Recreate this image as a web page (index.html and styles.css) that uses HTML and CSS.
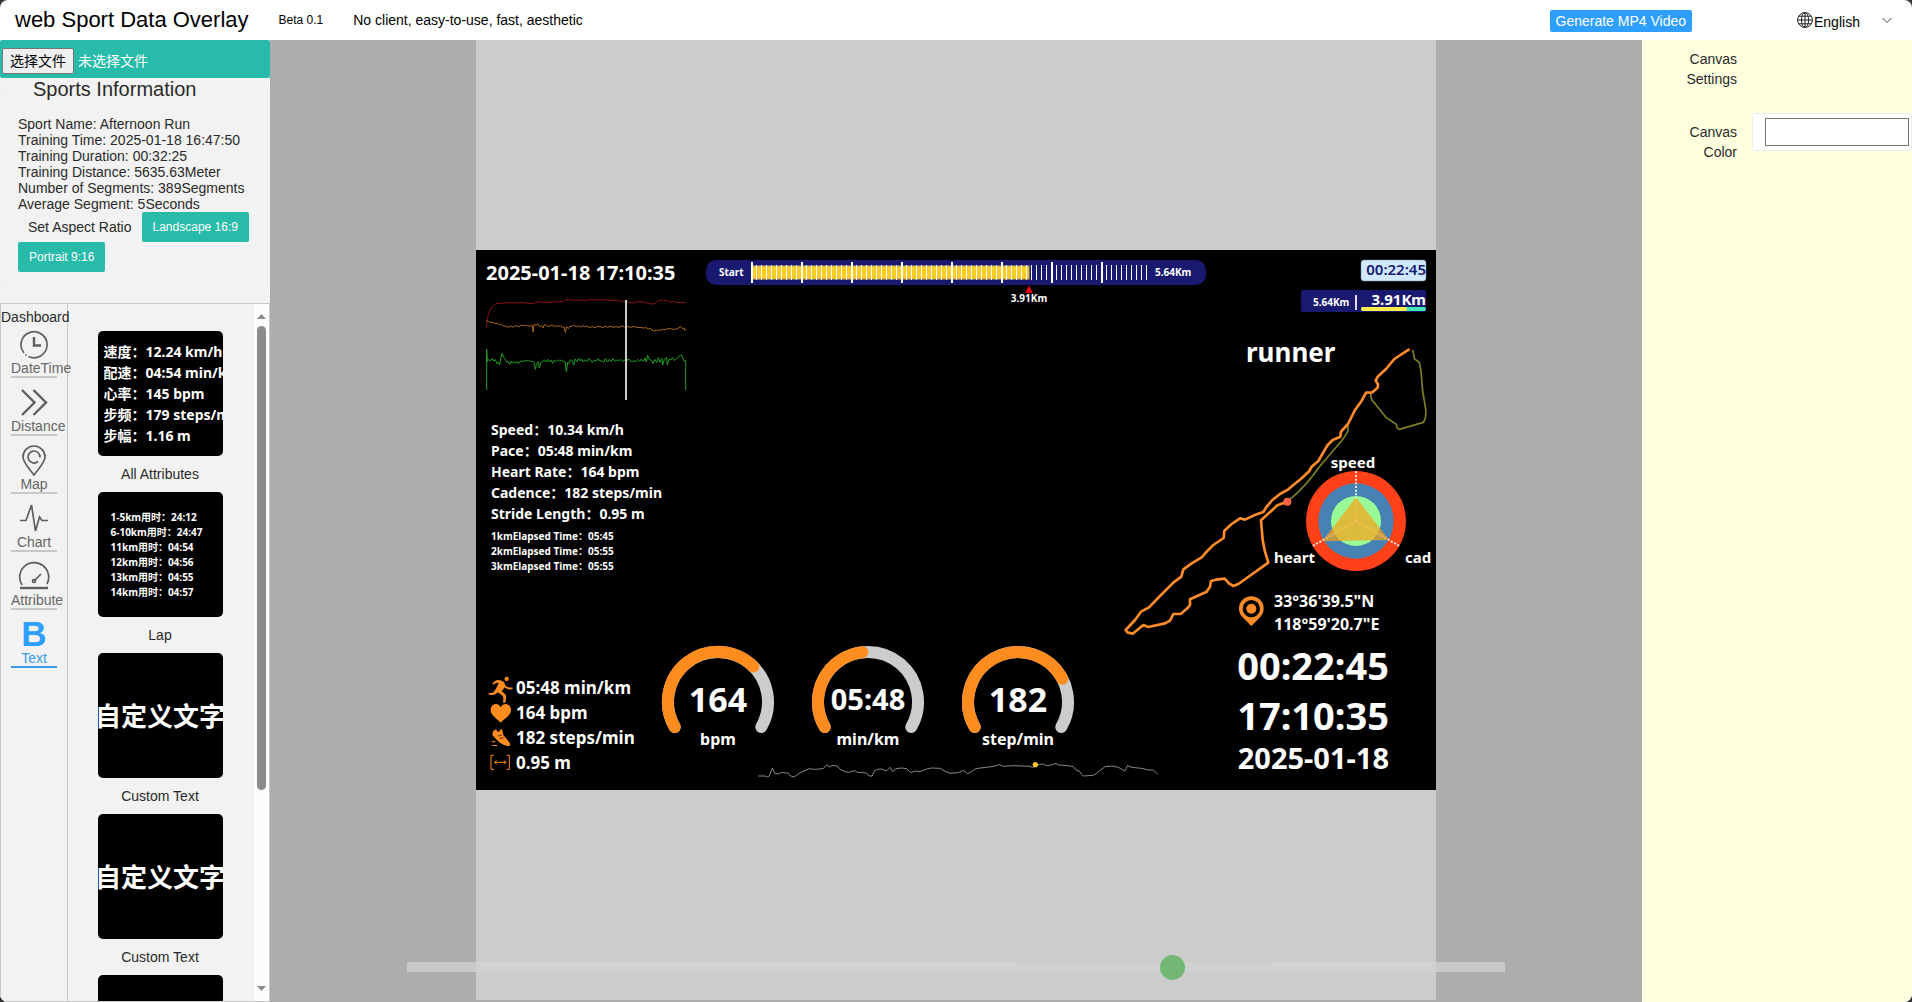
FILE: index.html
```html
<!DOCTYPE html>
<html lang="en">
<head>
<meta charset="utf-8">
<title>web Sport Data Overlay</title>
<link rel="stylesheet" href="styles.css">
</head>
<body>
<div class="app">
  <header class="topbar">
    <h1 class="brand">web Sport Data Overlay</h1>
    <span class="beta">Beta 0.1</span>
    <p class="slogan">No client, easy-to-use, fast, aesthetic</p>
    <button class="generate" type="button">Generate MP4 Video</button>
    <label class="language">
      <svg class="globe" viewBox="0 0 16 16" aria-hidden="true"><circle cx="8" cy="8" r="7.4"/><ellipse cx="8" cy="8" rx="3.6" ry="7.4"/><path d="M8 .6v14.8M.6 8h14.8M1.8 4.2h12.4M1.8 11.8h12.4"/></svg>
      <select aria-label="Language"><option>English</option></select>
      <svg class="chevron" viewBox="0 0 10 7" aria-hidden="true"><path d="M.5 1 5 5.500 9.500 1"/></svg>
    </label>
  </header>

  <div class="workspace">
    <aside class="side">
      <div class="file-bar">
        <input class="file-input" type="file" id="track-file">
        <label class="file-button" for="track-file">选择文件</label>
        <span class="file-name">未选择文件</span>
      </div>
      <fieldset class="info">
        <legend>Sports Information</legend>
        <div>Sport Name: Afternoon Run</div>
        <div>Training Time: 2025-01-18 16:47:50</div>
        <div>Training Duration: 00:32:25</div>
        <div>Training Distance: 5635.63Meter</div>
        <div>Number of Segments: 389Segments</div>
        <div>Average Segment: 5Seconds</div>
        <div class="ratio">
          <span class="ratio-label">Set Aspect Ratio</span>
          <button type="button">Landscape 16:9</button>
          <button type="button">Portrait 9:16</button>
        </div>
      </fieldset>

      <div class="library">
        <nav class="tabs">
          <div class="tabs-title">Dashboard</div>
          <a class="tab" href="#datetime"><svg viewBox="0 0 32 32"><path d="M6 25A13 13 0 1 1 10.500 28.500M7.500 26.500l1 .800"/><path class="bold" d="M16 9v8.500h7"/></svg><span>DateTime</span></a>
          <a class="tab" href="#distance"><svg viewBox="0 0 32 32"><path class="bold" d="M4 4l12.500 12.500L4 29M15.500 4L28 16.500 15.500 29"/></svg><span>Distance</span></a>
          <a class="tab" href="#map"><svg viewBox="0 0 32 32"><path d="M16 31C11 24 5 18.500 5 13a11 11 0 0 1 22 0c0 5.500-6 11-11 18z"/><path d="M20 17.500A6 6 0 1 1 22 13.500"/></svg><span>Map</span></a>
          <a class="tab" href="#chart"><svg viewBox="0 0 32 32"><path d="M2 18.500h6L13.500 3l4 26 4-14 2.500 3.500h6"/></svg><span>Chart</span></a>
          <a class="tab" href="#attribute"><svg viewBox="0 0 32 32"><path d="M4 25A14.500 14.500 0 1 1 29 24"/><path class="bold" d="M2 28h28"/><path d="M16 21l7-7"/><circle cx="16" cy="21" r="1.500"/></svg><span>Attribute</span></a>
          <a class="tab active" href="#text"><b class="glyph">B</b><span>Text</span></a>
        </nav>
        <div class="gallery">
          <figure><div class="thumb attrs"><p>速度：12.24 km/h</p><p>配速：04:54 min/km</p><p>心率：145 bpm</p><p>步频：179 steps/min</p><p>步幅：1.16 m</p></div><figcaption>All Attributes</figcaption></figure>
          <figure><div class="thumb laps"><p>1-5km用时：24:12</p><p>6-10km用时：24:47</p><p>11km用时：04:54</p><p>12km用时：04:56</p><p>13km用时：04:55</p><p>14km用时：04:57</p></div><figcaption>Lap</figcaption></figure>
          <figure><div class="thumb custom"><p>自定义文字</p></div><figcaption>Custom Text</figcaption></figure>
          <figure><div class="thumb custom"><p>自定义文字</p></div><figcaption>Custom Text</figcaption></figure>
          <figure><div class="thumb custom"></div></figure>
        </div>
        <div class="scroll" aria-hidden="true">
          <svg viewBox="0 0 9 5"><path d="M0 5 4.500 0 9 5z"/></svg>
          <div class="scroll-track"><div class="scroll-thumb"></div></div>
          <svg viewBox="0 0 9 5"><path d="M0 0h9L4.500 5z"/></svg>
        </div>
      </div>
    </aside>

    <main class="viewer">
      <div class="stage">
        <svg class="canvas" viewBox="0 0 960 540" role="img" aria-label="Overlay preview">
          <rect width="960" height="540"/>
          <text class="t" x="10" y="30" font-size="20">2025-01-18 17:10:35</text>

          <!-- heart rate, cadence and speed history -->
          <svg x="-6" y="-10" width="380" height="180" viewBox="0 0 1140 540">
            <g class="trace">
              <path stroke="#8b1111" d="M49 263l3-25 4-18 6-14 8-10 8-5 14-1 20-2 25 1 20-1 20 2 14 1 6-4 10-2 12 3 14-1 16-2 16 1 14-2 5-4 10-1 14 2 16-1 20 1 20-2 20 1 16-1 18 2 20 0 14 2 L490 189 508 184 528 188 545 192 555 191 562 183 570 181 592 181 598 186 610 185 620 188 635 187 648 188"/>
              <path stroke="#a8691a" d="M49 243h6l4 4 10 0 5 3 10 0 4 5 6-3 5 5 10 2 8 3 6-4 6 4 6-5 6 1 6 2 6-4 8 1 6-1 6 2h8l6-2 2 20 3-22 6 1 6-3 5 8 5-4 5 8 4-10 6 1 5 5 6-2 6-4 6 5 8-1 6 1 6-2 6 5 4-1 4 16 4-17 5 6 5-8 6 2 5-5 8 5 6-2 7 3 6-4 6 3 7-2 8 5 8-3 8 3 8-4 8 1 8 3 6-5 8 4 7-3 10 3 8-2 10 2 8-4 8 3 10-1 10 2 8-3 10 4 10-1 8 2 8-1 8 4 4-3 6 6 8 2 8-2 8 1 8-3 8 1 8-3h8l6 2 L620 267 632 260 638 266 643 264 645 272 648 268"/>
              <path stroke="#20a020" d="M50 450V327l2 37 4-6 5 5 6-8 4 8 5-4 5 12 4-5 4 9 4-24 4-12 3 12 5 5 5 10 4-1 5 8 4-10 4 6 5-4 5 5 4-6 5 7 5-7 5-1 5 2 4-5 6 3 5-2 6 4 5-1 5 3 4 21 4-15 4-8 4 19 4-16 5-3 5-6 6 7 5-8 5 8 5-6 5 10 5-9 5 4 6-6 5 5 5-4 6 4 5 1 4 30 4-28 4 3 5-11 5 4 4 13 4-19 6 8 5-10 5 8 4-6 5 9 5-7 6 6 5-9 5 3 6 8 6-7 6 3 5-7 6 8 5-3 6 6 5-11 6 10 6-8 5 7 6-9 7 8 5-5 5 4 6-5 6 7 5-5 6 6 5-9 6 3 6 6 6-4 6 3 5-7 6 6 5-7 6 7 5-10 4 12 4-20 5 12 6 3 5 10 6-13 5 10 5-15 5 14 5-12 3 20 5-17 6-6 3 22 5-16 6 2 5-7 5 9 6-6 6-4 6-7 5 2 L642 364 647 362V450"/>
            </g>
            <path stroke="#ccc" stroke-width="6" d="M468 180v300"/>
          </svg>

          <!-- distance ruler -->
          <rect x="230" y="10" width="500" height="25" rx="10" fill="#191970"/>
          <rect x="276" y="16" width="277" height="13" fill="#ffcc2a" stroke="#c9b06a"/>
          <path class="minor" d="M275 22.500h396"/>
          <path class="major" d="M275 22.500h352"/>
          <text class="t" x="243" y="26" font-size="10">Start</text>
          <text class="t" x="679" y="26" font-size="10">5.64Km</text>
          <path fill="#e8000d" d="M553 35.500l4 7.500h-8z"/>
          <text class="t mid" x="553" y="52" font-size="10">3.91Km</text>

          <rect x="885" y="10" width="65" height="21" rx="3" fill="#cfeaff" stroke="#7f93a8" stroke-width=".5"/>
          <text class="t navy end" x="950" y="25" font-size="15">00:22:45</text>

          <rect x="825" y="40" width="125" height="22" rx="2" fill="#191970"/>
          <text class="t" x="837" y="56" font-size="10">5.64Km</text>
          <path stroke="#dde" stroke-width="2" d="M880 45v15"/>
          <text class="t end" x="950" y="55" font-size="15">3.91Km</text>
          <path stroke="#40e5b5" stroke-width="4" stroke-linecap="round" d="M887 59h61"/>
          <path stroke="#ffee4a" stroke-width="4" stroke-linecap="round" d="M887 59h42"/>

          <text class="t" x="770" y="112" font-size="26">runner</text>

          <!-- route, radar and position pin -->
          <svg x="634" y="90" width="330" height="310" viewBox="0 0 990 930">
            <g class="route">
              <path stroke="#808026" stroke-width="5" d="M909 32L913 56 928 68 933 93 938 153 948 213 946 235 940 247 868 268 862 265 859 253 829 233 786 180 782 168 783 160M714 258V274L700 296 625 384C595 429 570 454 532 485"/>
              <path stroke="#ff8c28" stroke-width="8" d="M896 29L853 57 828 87 803 110 797 122 804 133 803 143 787 157 768 158 755 182 735 210 714 252 693 275 691 290 668 300 653 315 640 337 625 363 605 380 598 393 575 415 550 435 535 448 510 462 487 480 470 500 460 516 432 526 405 539 390 535 365 552 343 572 341 594 310 615 290 635 275 652 245 670 220 688 214 710 190 728 150 768 117 802 93 815 75 840 47 870 52 877 68 881 100 855 115 861 165 850 180 842 190 822 212 822 232 805 240 795 240 778 290 755 300 740 303 723 318 719 344 716 357 730 370 738 385 732 475 668 465 635 458 600 453 541 502 496 532 485"/>
            </g>
            <circle cx="532" cy="485" r="12" fill="#ff6347"/>
            <circle cx="738" cy="543" r="150" fill="#ff4019"/>
            <circle cx="738" cy="543" r="113" fill="#4682b4"/>
            <circle cx="738" cy="543" r="75" fill="#98fb98"/>
            <path stroke="#fff" stroke-width="5" stroke-dasharray="6 5" d="M738 543V393M738 543l-130 75M738 543l130 75"/>
            <path fill="#f5a31a" fill-opacity=".72" d="M738 472l99 128-200 4z"/>
            <path fill="#ff8c28" fill-rule="evenodd" d="M424 858l-26-26a37 37 0 1 1 52 0zM424 780a26 26 0 1 0 0 52 26 26 0 1 0 0-52zM424 791a15 15 0 1 1 0 30 15 15 0 1 1 0-30z"/>
          </svg>
          <text class="t mid" x="877" y="218" font-size="15">speed</text>
          <text class="t" x="798" y="313" font-size="15">heart</text>
          <text class="t" x="929" y="313" font-size="15">cad</text>
          <text class="t" x="798" y="357" font-size="16">33°36'39.5"N</text>
          <text class="t" x="798" y="380" font-size="16">118°59'20.7"E</text>
          <text class="t end" x="913" y="430" font-size="38">00:22:45</text>
          <text class="t end" x="913" y="480" font-size="38">17:10:35</text>
          <text class="t end" x="913" y="519" font-size="29">2025-01-18</text>

          <g class="t" font-size="14">
            <text x="15" y="185">Speed：10.34 km/h</text>
            <text x="15" y="206">Pace：05:48 min/km</text>
            <text x="15" y="227">Heart Rate：164 bpm</text>
            <text x="15" y="248">Cadence：182 steps/min</text>
            <text x="15" y="269">Stride Length：0.95 m</text>
          </g>
          <g class="t" font-size="10">
            <text x="15" y="290">1kmElapsed Time：05:45</text>
            <text x="15" y="305">2kmElapsed Time：05:55</text>
            <text x="15" y="320">3kmElapsed Time：05:55</text>
          </g>

          <!-- live values with icons -->
          <svg x="-6" y="380" width="360" height="160" viewBox="0 0 1080 480">
            <g fill="#ff8c1e">
              <circle cx="110" cy="147" r="6.500"/>
              <path d="M75 153c8-5 17-3 27 3l4 10c5 6 12 8 21 6l1 5c-9 3-18 1-24-5l-9 12 10 8c4 4 4 12 1 26h-7c2-12 1-19-3-22l-13-9c-7 10-17 9-29 6l3-4c10 1 15-2 21-13l8-17c-6-2-10 0-14 5l-5-3z"/>
              <path d="M92 278C80 266 62 256 62 240c0-19 22-25 30-8 8-17 31-11 31 8 0 16-19 26-31 38z"/>
              <path d="M70 302l8-4 5 7c5 1 8-3 8-8l6 3 3 15 18 22c5 7 2 12-5 11-12-1-20-7-28-14l-15-15c-4-5-3-9 0-17z"/>
              <path d="M65 334h11v3H65zM67 345h15v3H67z"/>
            </g>
            <path fill="none" stroke="#000" stroke-width="2" d="M84 318l13-3M88 326l13-3"/>
            <path fill="none" stroke="#ff8c1e" stroke-width="3" d="M72 376h-9v42h9M110 376h8v42h-8M74 397h34M80 391l-6 6 6 6M102 391l6 6-6 6"/>
          </svg>
          <g class="t" font-size="17">
            <text x="40" y="444">05:48 min/km</text>
            <text x="40" y="469">164 bpm</text>
            <text x="40" y="494">182 steps/min</text>
            <text x="40" y="519">0.95 m</text>
          </g>

          <!-- gauges -->
          <g class="gauge">
            <path d="M198.700 477A50 50 0 1 1 285.300 477M348.700 477A50 50 0 1 1 435.300 477M498.700 477A50 50 0 1 1 585.300 477"/>
            <path class="value" d="M198.700 477A50 50 0 0 1 277.400 416.600M348.700 477A50 50 0 0 1 386.300 402.300M498.700 477A50 50 0 1 1 586.300 428.800"/>
          </g>
          <g class="t mid">
            <text x="242" y="462" font-size="34">164</text>
            <text x="392" y="460" font-size="29">05:48</text>
            <text x="542" y="462" font-size="34">182</text>
            <text x="242" y="495" font-size="16">bpm</text>
            <text x="392" y="495" font-size="16">min/km</text>
            <text x="542" y="495" font-size="16">step/min</text>
          </g>

          <!-- elevation profile -->
          <svg x="264" y="380" width="440" height="160" viewBox="0 0 1320 480">
            <path fill="none" stroke="#888" stroke-width="3" d="M54 438L75 438 82 441 88 438 97 414 104 430 115 432 125 427 145 430 152 438 163 441 172 434 180 428 195 422 207 416 220 418 240 417 250 415 262 404 268 411 278 406 292 408 300 418 315 425 325 427 345 422 352 427 380 429 387 438 397 438 402 424 412 418 425 417 432 420 440 422 450 412 458 425 468 416 485 414 500 416 512 428 525 423 540 425 560 417 575 414 600 415 612 422 630 430 655 428 670 421 683 431 695 425 705 417 720 414 740 412 765 408 778 404 790 409 820 407 870 409 878 413 890 404 910 402 920 407 935 405 948 400 955 405 985 407 1000 410 1008 420 1018 424 1030 438 1060 436 1072 428 1095 410 1115 408 1135 412 1155 423 1162 407 1175 412 1205 415 1225 420 1240 420 1253 432"/>
            <circle cx="886" cy="404" r="8" fill="#ffc832"/>
          </svg>
        </svg>
      </div>
      <input class="timeline" type="range" min="0" max="389" value="273" aria-label="Timeline">
    </main>

    <aside class="settings">
      <div class="field"><span class="field-label">Canvas Settings</span></div>
      <div class="field">
        <label class="field-label" for="canvas-color">Canvas Color</label>
        <input class="color" type="color" id="canvas-color" value="#ffffff">
      </div>
    </aside>
  </div>
</div>
</body>
</html>
```
FILE: styles.css
```css
* { box-sizing: border-box; }

body {
  margin: 0;
  background: #333;
  color: #2a2a2a;
  font: 14px/16px "Liberation Sans", Arial, "Noto Sans CJK SC", sans-serif;
}

p, figure, h1 { margin: 0; }
button, select, input { font-family: inherit; }

.app {
  display: flex;
  flex-direction: column;
  height: 100vh;
  border-radius: 8px;
  overflow: hidden;
  background: #fff;
}

/* top bar */
.topbar {
  display: flex;
  align-items: center;
  flex: 0 0 40px;
  padding: 0 20px 0 15px;
  color: #000;
}
.brand { font-size: 22px; line-height: 40px; font-weight: 400; }
.beta { margin-left: 30px; font-size: 12px; }
.slogan { margin-left: 30px; }
.generate {
  height: 22px;
  margin: 2px 105px 0 auto;
  padding: 0 6px;
  border: 0;
  border-radius: 2px;
  background: #2f9fff;
  color: #fff;
  font-size: 14px;
}
.language { display: flex; align-items: center; }
.globe { width: 16px; height: 16px; fill: none; stroke: #222; stroke-width: 1; }
.language select {
  width: 69px;
  margin-top: 4px;
  padding: 0 1px;
  border: 0;
  background: none;
  appearance: none;
  color: #000;
  font-size: 14px;
}
.chevron { width: 10px; height: 7px; fill: none; stroke: #444; }

.workspace { display: flex; flex: 1; min-height: 0; }

/* left side */
.side { display: flex; flex-direction: column; flex: 0 0 270px; background: #f2f2f2; }
.file-bar {
  display: flex;
  align-items: center;
  gap: 4px;
  height: 38px;
  padding: 4px 2px 0;
  border-radius: 2px;
  background: #28bbaa;
  color: #fff;
}
.file-input { position: absolute; width: 1px; height: 1px; opacity: 0; }
.file-button {
  padding: 3px 7px;
  border: 1px solid #767676;
  border-radius: 2px;
  background: #efefef;
  color: #000;
  line-height: 18px;
}
.info {
  min-width: 0;
  height: 210px;
  margin: 0 2px 15px;
  padding: 16px 15px 14px;
  border: 1px solid #eee;
}
.info legend { margin-left: 5px; padding: 0 10px; font-size: 20px; line-height: 22px; }
.ratio { display: flex; flex-wrap: wrap; align-items: center; }
.ratio-label { padding: 0 10px; }
.ratio button {
  height: 30px;
  padding: 0 11px;
  border: 0;
  border-radius: 2px;
  background: #28bbaa;
  color: #fff;
  font-size: 12px;
}

.library {
  display: flex;
  flex: 1;
  min-height: 0;
  border: 1px solid #c8c8c8;
}
.tabs {
  display: flex;
  flex-direction: column;
  align-items: flex-start;
  gap: 8px;
  flex: 0 0 67px;
  min-width: 0;
  border-right: 1px solid #c8c8c8;
}
.tabs-title { margin-bottom: -8px; padding-top: 2px; line-height: 22px; }
.tab {
  display: flex;
  flex-direction: column;
  width: 46px;
  margin-left: 10px;
  border-bottom: 2px solid #c8c8c8;
  color: #666;
  text-align: center;
  text-decoration: none;
}
.tab svg { width: 32px; height: 32px; margin-left: 7px; fill: none; stroke: #5f5f5f; stroke-width: 1.700; }
.tab .bold { stroke-width: 2.400; }
.glyph { height: 32px; font-size: 35px; line-height: 32px; }
.tab.active { border-color: #3a9be8; color: #3a9bee; }
.tab.active .glyph { color: #2f9fff; }

.gallery {
  display: flex;
  flex-direction: column;
  align-items: center;
  flex: 1;
  min-width: 0;
  padding: 27px 2px 0 0;
  overflow: hidden;
}
.thumb {
  display: flex;
  flex-direction: column;
  justify-content: center;
  width: 125px;
  height: 125px;
  border-radius: 5px;
  overflow: hidden;
  background: #000;
  color: #fff;
  font-family: "Noto Sans", "Noto Sans CJK SC", sans-serif;
  font-weight: 700;
  white-space: nowrap;
}
.attrs { padding-left: 6px; font-size: 14px; line-height: 21px; }
.laps { padding-left: 13px; font-size: 10px; line-height: 15px; }
.custom { align-items: center; font-size: 26px; line-height: 36px; }
figcaption { line-height: 36px; text-align: center; }

.scroll {
  display: flex;
  flex-direction: column;
  align-items: center;
  gap: 7px;
  flex: 0 0 15px;
  padding: 10px 0;
  background: #fcfcfc;
}
.scroll svg { width: 9px; height: 5px; fill: #8b8b8b; }
.scroll-track { flex: 1; }
.scroll-thumb { width: 9px; height: 71%; border-radius: 5px; background: #8b8b8b; }

/* preview */
.viewer {
  position: relative;
  display: flex;
  justify-content: center;
  flex: 1;
  min-width: 0;
  background: #aeadab;
}
.stage {
  display: flex;
  align-items: center;
  height: calc(100% - 2px);
  aspect-ratio: 1;
  background: #ccc;
}
.canvas { display: block; width: 100%; }
.t {
  fill: #fff;
  font-family: "Noto Sans", "Noto Sans CJK SC", sans-serif;
  font-weight: 700;
}
.mid { text-anchor: middle; }
.end { text-anchor: end; }
.navy { fill: #191970; font-weight: 600; }
.trace { fill: none; stroke-width: 3; stroke-linejoin: round; }
.route { fill: none; stroke-linecap: round; stroke-linejoin: round; }
.minor { stroke: #fff; stroke-width: 15; stroke-dasharray: 1 4; }
.major { stroke: #fff; stroke-width: 21; stroke-dasharray: 2 48; }
.gauge { fill: none; stroke: #ccc; stroke-width: 12; stroke-linecap: round; }
.gauge .value { stroke: #ff8c1e; }

.timeline {
  position: absolute;
  left: 10%;
  bottom: 30px;
  width: 80%;
  height: 10px;
  margin: 0;
  appearance: none;
  background: #d3d3d3;
  opacity: .7;
}
.timeline::-webkit-slider-thumb {
  appearance: none;
  width: 25px;
  height: 25px;
  border-radius: 50%;
  background: #4caf50;
}

/* right side */
.settings { flex: 0 0 270px; background: #ffffe0; }
.field { display: flex; align-items: flex-start; margin-bottom: 15px; }
.field-label { flex: 0 0 110px; padding: 9px 15px; line-height: 20px; text-align: right; }
.color {
  flex: 1;
  min-width: 0;
  height: 38px;
  padding: 0 0 0 10px;
  border: 1px solid #eee;
  border-radius: 2px;
  background: #fff;
}
```
